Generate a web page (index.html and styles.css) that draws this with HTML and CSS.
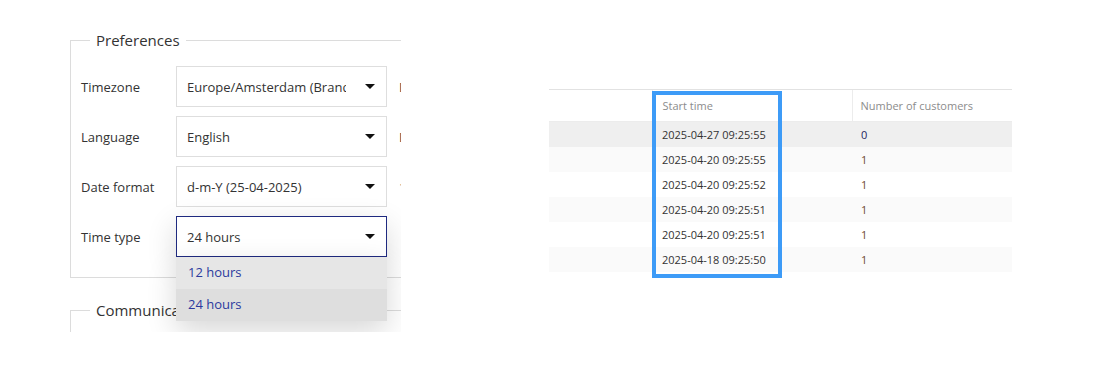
FILE: index.html
```html
<!DOCTYPE html>
<html lang="en">
<head>
  <meta charset="UTF-8">
  <meta name="viewport" content="width=device-width, initial-scale=1.0">
  <title>Preferences and sessions</title>
  <link rel="stylesheet" href="styles.css">
</head>
<body>
  <div class="page">
    <div class="settings-clip">
      <fieldset class="group">
        <legend>Preferences</legend>
        <div class="row">
          <label>Timezone</label>
          <div class="select"><span class="value">Europe/Amsterdam (Brandenburg)</span><span class="caret"></span></div>
          <span class="side">Daylight saving</span>
        </div>
        <div class="row">
          <label>Language</label>
          <div class="select"><span class="value">English</span><span class="caret"></span></div>
          <span class="side">Default</span>
        </div>
        <div class="row">
          <label>Date format</label>
          <div class="select"><span class="value">d-m-Y (25-04-2025)</span><span class="caret"></span></div>
          <span class="side">1st day</span>
        </div>
        <div class="row">
          <label>Time type</label>
          <div class="select-wrap">
            <div class="select open"><span class="value">24 hours</span><span class="caret"></span></div>
            <ul class="options">
              <li>12 hours</li>
              <li class="active">24 hours</li>
            </ul>
          </div>
        </div>
      </fieldset>
      <fieldset class="group second">
        <legend>Communication</legend>
      </fieldset>
    </div>

    <div class="table-wrap">
      <table class="log">
        <thead>
          <tr><th class="first"></th><th>Start time</th><th>Number of customers</th></tr>
        </thead>
        <tbody>
          <tr class="hover"><td></td><td>2025-04-27 09:25:55</td><td class="zero">0</td></tr>
          <tr><td></td><td>2025-04-20 09:25:55</td><td class="num">1</td></tr>
          <tr><td></td><td>2025-04-20 09:25:52</td><td class="num">1</td></tr>
          <tr><td></td><td>2025-04-20 09:25:51</td><td class="num">1</td></tr>
          <tr><td></td><td>2025-04-20 09:25:51</td><td class="num">1</td></tr>
          <tr><td></td><td>2025-04-18 09:25:50</td><td class="num">1</td></tr>
        </tbody>
      </table>
      <div class="highlight"></div>
    </div>
  </div>
</body>
</html>
```

FILE: styles.css
```css
body {
  margin: 0;
  font-family: 'Open Sans', sans-serif;
  background: #fff;
  color: #333;
}

.page {
  display: flex;
  align-items: flex-start;
}

/* left panel, cropped like the screenshot */
.settings-clip {
  margin-left: 60px;
  margin-top: 30px;
  width: 341px;
  height: 302px;
  padding-left: 10px;
  box-sizing: border-box;
  overflow: hidden;
}

.group {
  width: 420px;
  margin: 0;
  padding: 7px 0 20px 10px;
  border: 1px solid #dcdcdc;
  box-sizing: border-box;
}

.group legend {
  margin-left: 9px;
  padding: 0 6px;
  font-size: 15px;
  line-height: 20px;
  color: #333;
}

.group.second {
  margin-top: 22px;
  height: 60px;
}

.row {
  display: flex;
  align-items: center;
  margin-top: 9px;
  font-size: 13px;
}

.row label {
  width: 95px;
  flex: none;
  color: #333;
}

.select {
  width: 211px;
  height: 41px;
  box-sizing: border-box;
  border: 1px solid #dedede;
  background: #fff;
  display: flex;
  align-items: center;
  padding: 0 10px;
  flex: none;
}

.select .value {
  width: 159px;
  white-space: nowrap;
  overflow: hidden;
  color: #333;
}

.caret {
  margin-left: auto;
  margin-right: 1px;
  width: 0;
  height: 0;
  border-left: 5px solid transparent;
  border-right: 5px solid transparent;
  border-top: 5px solid #111;
}

.side {
  margin-left: 12px;
  white-space: nowrap;
  color: #444;
}

.select-wrap {
  position: relative;
  box-shadow: 0 10px 30px rgba(0,0,0,0.16);
}

.select.open {
  border-color: #1f2a80;
}

.options {
  position: absolute;
  top: 41px;
  left: 0;
  width: 211px;
  margin: 0;
  padding: 0;
  list-style: none;
  background: #e6e6e6;
  box-shadow: 0 10px 30px rgba(0,0,0,0.16);
  z-index: 2;
}

.options li {
  height: 32px;
  line-height: 31px;
  padding-left: 12px;
  color: #2b3a9e;
  font-size: 13px;
}

.options li.active {
  background: #dedede;
}

/* right panel */
.table-wrap {
  position: relative;
  margin-left: 148px;
  margin-top: 89px;
  width: 463px;
}

.log {
  width: 100%;
  border-collapse: collapse;
  font-size: 11px;
  table-layout: fixed;
}

.log th {
  height: 32px;
  box-sizing: border-box;
  text-align: left;
  font-weight: normal;
  color: #8c8c8c;
  padding: 0 10px;
  border-top: 1px solid #e2e2e2;
  border-bottom: 1px solid #ececec;
  border-left: 1px solid #ececec;
}

.log th.first {
  width: 103px;
  border-left: none;
}

.log th:nth-child(2) {
  width: 200px;
}

.log th:nth-child(3) {
  padding-left: 8px;
}

.log td {
  height: 25px;
  padding: 0 10px;
  color: #333;
}

.log td:nth-child(3) {
  padding-left: 9px;
}

.log tbody tr:nth-child(even) {
  background: #fafafa;
}

.log tbody tr.hover {
  background: #efefef;
}

.log td.zero {
  color: #1e2560;
}

.log td.num {
  color: #6e4a32;
}

.highlight {
  position: absolute;
  left: 103px;
  top: 2px;
  width: 130px;
  height: 187px;
  box-sizing: border-box;
  border: 4px solid #3d9bf7;
  pointer-events: none;
}
```
